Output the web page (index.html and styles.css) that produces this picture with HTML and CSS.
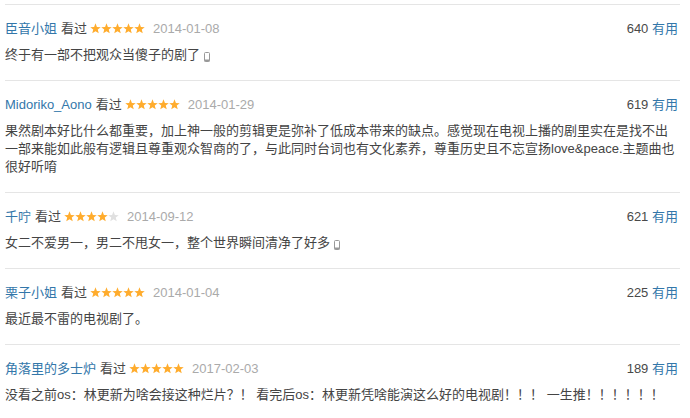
FILE: index.html
```html
<!DOCTYPE html>
<html lang="zh-CN">
<head>
<meta charset="utf-8">
<title>短评</title>
<link rel="stylesheet" href="styles.css">
</head>
<body>
<svg width="0" height="0" class="defs">
  <defs>
    <symbol id="star" viewBox="0 0 24 24">
      <polygon points="12,0.8 15.06,8.59 23.41,9.09 16.95,14.41 19.05,22.51 12,18 4.95,22.51 7.05,14.41 0.59,9.09 8.94,8.59"/>
    </symbol>
    <symbol id="phone" viewBox="0 0 6 10">
      <rect x="0.5" y="0.5" width="5" height="9" rx="1" fill="none" stroke="currentColor" stroke-width="1"/>
      <rect x="0.5" y="7.5" width="5" height="2" fill="currentColor"/>
    </symbol>
  </defs>
</svg>
<div class="list">
  <div class="review">
    <div class="head">
      <div class="info">
        <span class="user">臣音小姐</span>
        <span class="seen">看过</span>
        <span class="stars"><svg class="on"><use href="#star"/></svg><svg class="on"><use href="#star"/></svg><svg class="on"><use href="#star"/></svg><svg class="on"><use href="#star"/></svg><svg class="on"><use href="#star"/></svg></span>
        <span class="date">2014-01-08</span>
      </div>
      <div class="votes"><span class="num">640</span> <span class="useful">有用</span></div>
    </div>
    <p class="text">终于有一部不把观众当傻子的剧了 <svg class="phone"><use href="#phone"/></svg></p>
  </div>
  <div class="review">
    <div class="head">
      <div class="info">
        <span class="user">Midoriko_Aono</span>
        <span class="seen">看过</span>
        <span class="stars"><svg class="on"><use href="#star"/></svg><svg class="on"><use href="#star"/></svg><svg class="on"><use href="#star"/></svg><svg class="on"><use href="#star"/></svg><svg class="on"><use href="#star"/></svg></span>
        <span class="date">2014-01-29</span>
      </div>
      <div class="votes"><span class="num">619</span> <span class="useful">有用</span></div>
    </div>
    <p class="text">果然剧本好比什么都重要，加上神一般的剪辑更是弥补了低成本带来的缺点。感觉现在电视上播的剧里实在是找不出一部来能如此般有逻辑且尊重观众智商的了，与此同时台词也有文化素养，尊重历史且不忘宣扬love&amp;peace.主题曲也很好听唷</p>
  </div>
  <div class="review">
    <div class="head">
      <div class="info">
        <span class="user">千咛</span>
        <span class="seen">看过</span>
        <span class="stars"><svg class="on"><use href="#star"/></svg><svg class="on"><use href="#star"/></svg><svg class="on"><use href="#star"/></svg><svg class="on"><use href="#star"/></svg><svg class="off"><use href="#star"/></svg></span>
        <span class="date">2014-09-12</span>
      </div>
      <div class="votes"><span class="num">621</span> <span class="useful">有用</span></div>
    </div>
    <p class="text">女二不爱男一，男二不甩女一，整个世界瞬间清净了好多 <svg class="phone"><use href="#phone"/></svg></p>
  </div>
  <div class="review">
    <div class="head">
      <div class="info">
        <span class="user">栗子小姐</span>
        <span class="seen">看过</span>
        <span class="stars"><svg class="on"><use href="#star"/></svg><svg class="on"><use href="#star"/></svg><svg class="on"><use href="#star"/></svg><svg class="on"><use href="#star"/></svg><svg class="on"><use href="#star"/></svg></span>
        <span class="date">2014-01-04</span>
      </div>
      <div class="votes"><span class="num">225</span> <span class="useful">有用</span></div>
    </div>
    <p class="text">最近最不雷的电视剧了。</p>
  </div>
  <div class="review">
    <div class="head">
      <div class="info">
        <span class="user">角落里的多士炉</span>
        <span class="seen">看过</span>
        <span class="stars"><svg class="on"><use href="#star"/></svg><svg class="on"><use href="#star"/></svg><svg class="on"><use href="#star"/></svg><svg class="on"><use href="#star"/></svg><svg class="on"><use href="#star"/></svg></span>
        <span class="date">2017-02-03</span>
      </div>
      <div class="votes"><span class="num">189</span> <span class="useful">有用</span></div>
    </div>
    <p class="text">没看之前os：林更新为啥会接这种烂片？！ 看完后os：林更新凭啥能演这么好的电视剧！！！ 一生推！！！！！！</p>
  </div>
</div>
</body>
</html>
```

FILE: styles.css
```css
html, body {
  margin: 0;
  padding: 0;
  background: #fff;
}
body {
  font-family: "Liberation Sans", Arial, "Noto Sans CJK SC", sans-serif;
  font-size: 13px;
  line-height: 18px;
  color: #444;
}
.defs {
  position: absolute;
  width: 0;
  height: 0;
  overflow: hidden;
}
.list {
  margin: 4px 10px 0 5px;
  width: 675px;
}
.review {
  border-top: 1px solid #e5e5e5;
  padding: 15px 0 16px;
}
.head {
  display: flex;
  justify-content: space-between;
  align-items: center;
  height: 18px;
}
.info {
  display: flex;
  align-items: center;
  white-space: nowrap;
}
.user {
  color: #3377aa;
}
.seen {
  color: #494949;
  margin-left: 4px;
}
.stars {
  display: inline-flex;
  margin-left: 3px;
  margin-top: -1px;
}
.stars svg {
  width: 11px;
  height: 11px;
}
.stars .on {
  fill: #ffac2d;
}
.stars .off {
  fill: #e0e0e0;
}
.date {
  color: #aaa;
  margin-left: 8px;
}
.votes {
  margin-right: 2px;
  white-space: nowrap;
}
.num {
  color: #494949;
}
.useful {
  color: #3377aa;
}
.text {
  margin: 8px 0 0;
  word-break: break-all;
}
.phone {
  width: 6px;
  height: 10px;
  color: #999;
  vertical-align: -3px;
}
```
